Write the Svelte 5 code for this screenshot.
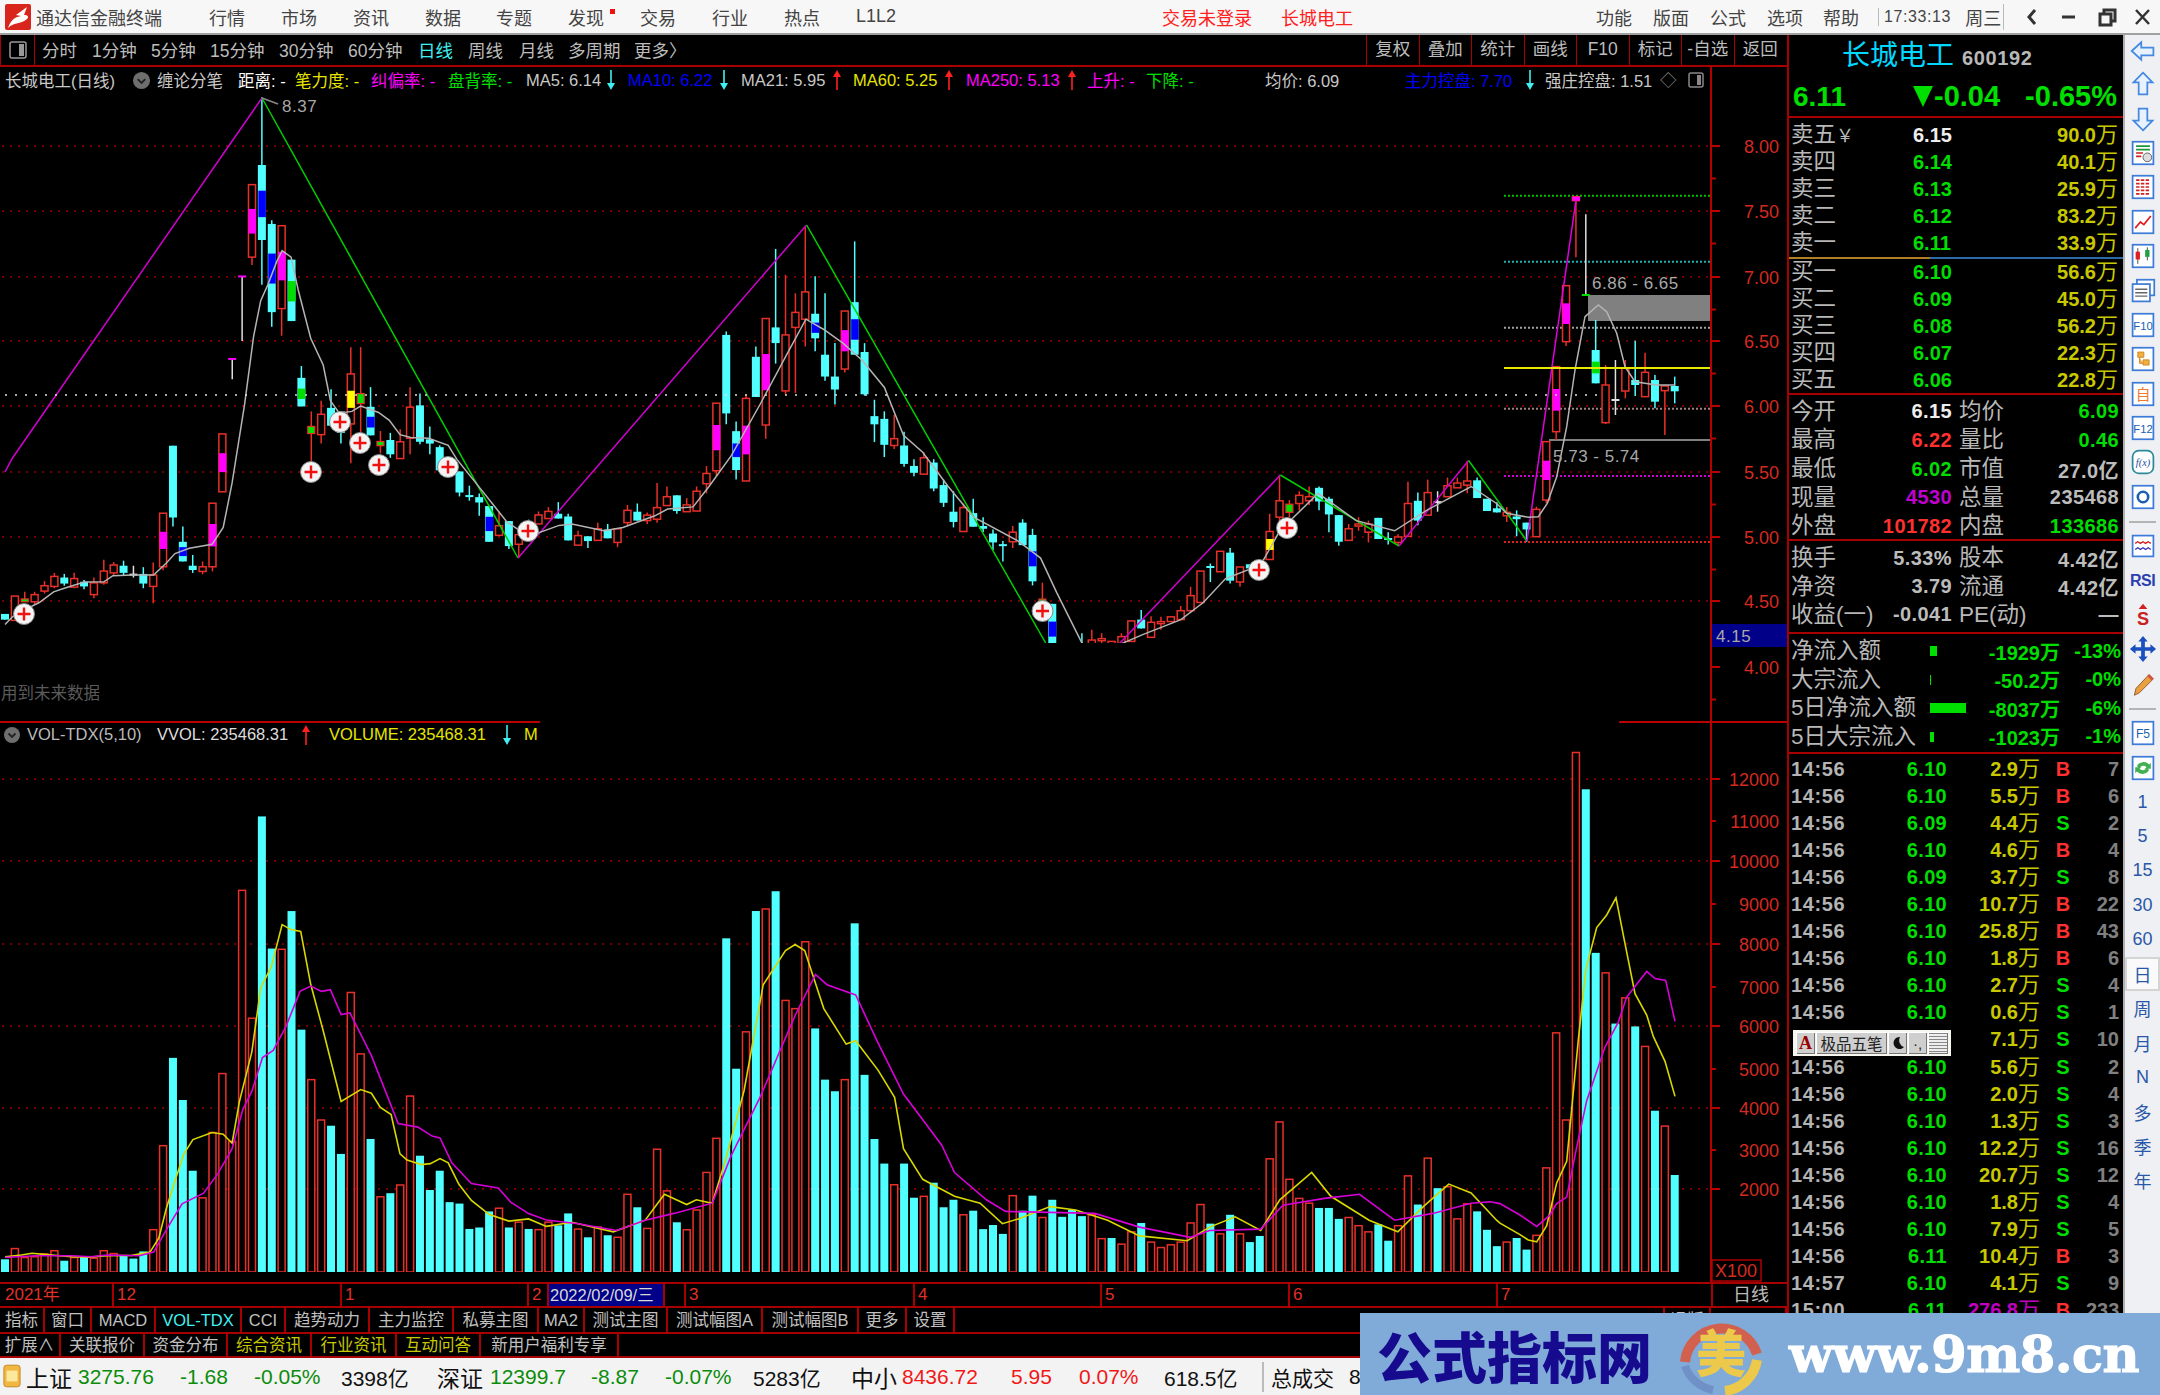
<script>
  // cumulative x -> cell width, so rows stay in normal flex flow
  const flow = (list, end) =>
    list.map((it, i) => ({ ...it, w: (list[i + 1] ? list[i + 1].x : end ?? it.x + 40) - it.x }));

  const menuLeft = flow([
    { x: 36, t: '通达信金融终端' }, { x: 209, t: '行情' }, { x: 281, t: '市场' }, { x: 353, t: '资讯' },
    { x: 425, t: '数据' }, { x: 496, t: '专题' }, { x: 568, t: '发现', dot: true }, { x: 640, t: '交易' },
    { x: 712, t: '行业' }, { x: 784, t: '热点' }, { x: 856, t: 'L1L2' },
    { x: 1162, t: '交易未登录', red: true }, { x: 1281, t: '长城电工', red: true },
    { x: 1596, t: '功能' }, { x: 1653, t: '版面' }, { x: 1710, t: '公式' }, { x: 1767, t: '选项' }, { x: 1823, t: '帮助' }
  ], 1878);

  const periods = flow([
    { x: 42, t: '分时' }, { x: 92, t: '1分钟' }, { x: 151, t: '5分钟' }, { x: 210, t: '15分钟' }, { x: 279, t: '30分钟' },
    { x: 348, t: '60分钟' }, { x: 418, t: '日线', on: true }, { x: 468, t: '周线' }, { x: 519, t: '月线' },
    { x: 568, t: '多周期' }, { x: 634, t: '更多〉' }
  ], 1366);
  const actions = ['复权', '叠加', '统计', '画线', 'F10', '标记', '-自选', '返回'];

  const W = '#c8c8c8', Y = '#e6e600', M = '#ff00ff', G = '#00e000', B = '#0000ff', R = '#ff2020', C = '#40f0f0';
  const info = flow([
    { x: 5, t: '长城电工(日线)', c: W }, { x: 132, icon: true }, { x: 157, t: '缠论分笔', c: W }, { x: 238, t: '距离: -', c: '#fff' },
    { x: 295, t: '笔力度: -', c: Y }, { x: 371, t: '纠偏率: -', c: M }, { x: 448, t: '盘背率: -', c: G },
    { x: 526, t: 'MA5: 6.14', c: W }, { x: 605, arrow: 'down', c: C }, { x: 628, t: 'MA10: 6.22', c: B }, { x: 718, arrow: 'down', c: C },
    { x: 741, t: 'MA21: 5.95', c: W }, { x: 831, arrow: 'up', c: R }, { x: 853, t: 'MA60: 5.25', c: Y }, { x: 943, arrow: 'up', c: R },
    { x: 966, t: 'MA250: 5.13', c: M }, { x: 1066, arrow: 'up', c: R }, { x: 1087, t: '上升: -', c: M }, { x: 1146, t: '下降: -', c: G },
    { x: 1265, t: '均价: 6.09', c: W }, { x: 1405, t: '主力控盘: 7.70', c: B }, { x: 1524, arrow: 'down', c: C },
    { x: 1545, t: '强庄控盘: 1.51', c: W }, { x: 1660, t: '◇', c: '#888' }
  ], 1688);

  // candles: [kind, bodyTop, bodyBottom, high, low, midTop, midBottom, midColour]
  // y values sampled from three crops of different scale, mapped to page y below
  const blockA = [
    ['c',1467,1483],['r',1417,1485],['g',1425,1433,1405,1433],['r',1413,1433,1405,1440],['r',1388,1403,1375,1410],
    ['r',1362,1390,1352,1395],['c',1365,1382,1355,1388],['r',1368,1392,1352,1395],['c',1377,1390,1372,1398],['r',1380,1413,1365,1423],
    ['r',1347,1380,1315,1385],['r',1330,1352,1322,1358],['c',1332,1352,1318,1358],['w',1357,1358,1332,1365],['c',1355,1382,1336,1395],
    ['r',1358,1390,1323,1437],['r',1185,1335,0,1345,1237,1285,'m'],['c',996,1197,0,1222],['c',1265,1320,1222,1320,1280,1305,'b'],['c',1332,1344,1302,1352],
    ['r',1335,1348,1320,1356],['r',1157,1335,0,1348,1215,1278,'m'],['r',963,1125,0,0,1017,1070,'m'],['t',753,754,753,810],['t',522,523,522,703],
    ['r',265,468,0,490,333,402,'m'],['c',210,420,20,545,282,356,'b'],['c',375,622,365,663,458,542,'b'],['r',380,612,0,688,453,533,'m'],['c',475,647,0,0,535,592,'g'],
    ['c',806,886,773,0,836,865,'g'],['g',942,962,900,1040],['r',908,965,870,990],['c',890,940,838,0],['c',900,960,0,990],
    ['r',795,935,720,1045,842,890,'y'],['g',850,878,720,960],['c',887,967,832,0,915,945,'b'],['g',984,996,955,1018],['c',980,1020,960,1030],
    ['r',985,1032,950,0],['r',888,975,832,1020],['c',883,985,850,992],['c',978,990,942,1020],['c',1000,1065,995,0],
    ['c',1030,1070],['c',1068,1127,0,1138],['x',1137,1139,1108,1150],['c',1140,1155,1130,1192],['c',1165,1265,0,0,1195,1235,'b'],
    ['r',1220,1247,1180,0],['c',1207,1277,0,1285],['r',1245,1272,0,1310],['c',1210,1260,1203,0],['r',1190,1215,1180,0],
    ['r',1180,1200,1168,0]
  ];
  const blockB = [
    ['c',445,452,428,0],['c',449,484,445,0],['r',477,491,470,0],['c',478,485,0,495],['r',467,484,458,0],['c',468,481,460,0],['r',467,487,0,494],
    ['r',440,458,432,462],['c',442,455,430,0],['r',447,455,443,460],['r',436,453,400,458],['r',420,433,405,0],['c',418,441,0,445],['r',432,442,422,0],
    ['r',412,441,405,0],['r',386,401,375,415],['r',283,382,0,390,315,352,'m'],['c',183,298,178,314],['c',324,381,310,395,342,362,'b'],['r',276,397,270,0,316,358,'m'],
    ['c',215,274,200,0],['r',159,315,0,335,211,264,'m'],['c',172,195,57,225],['r',183,265,95,270],['r',150,172,122,268],['r',120,160,25,200],
    ['c',152,188,97,207,165,180,'b'],['c',212,244,122,250],['c',244,263,195,285],['r',148,233,0,238,176,207,'m'],['c',135,212,46,0,160,190,'b'],['c',208,270,195,272],
    ['c',302,314,278,340],['c',306,344,295,362],['r',335,345,300,350],['c',345,372,325,376],['c',375,385,365,390],['r',363,387,355,0],['c',370,408,365,412],
    ['c',403,429,395,435],['c',442,457,412,465],['r',436,471,430,0],['c',444,464,423,0],['c',463,467,450,472],['c',474,487,468,498],['x',491,493,485,515],
    ['r',472,486,463,495],['c',458,491,453,0],['c',476,544,467,550,500,522,'b'],['g',570,580,546,600],['c',577,660,0,0,603,625,'b'],
    ['c',700,710],['c',700,710],['c',637,660,620,0],['r',630,636,615,640],['r',628,631,620,640],['r',632,636,0,640],['r',625,635,620,0],
    ['r',602,632],['c',600,613,586,0],['r',604,626,595,0],['r',603,606,596,615],['r',596,603],['r',587,600,580,0],['r',565,587,552,590],['r',529,575],
    ['x',523,526,518,545],['r',500,530],['c',502,543,495,547],['r',523,545,0,552],['c',519,525],['c',520,530],['r',471,512,445,0,482,498,'y'],['r',426,450,388,465],
    ['g',431,443,425,450],['r',418,430,412,440],['r',420,426,405,432],['c',407,427,405,440],['c',423,446,420,472],['c',447,486,0,492],['r',467,484,460,0],
    ['r',460,463,450,470],['r',460,472,455,487],['c',451,482],['x',482,484,472,490],['r',479,487,475,492],['r',430,478,398,0],['c',426,455,414,462],
    ['r',414,447,395,0],['w',428,429,412,442],['r',404,420,392,0],['r',400,407,392,0],['r',397,403,368,415],['c',396,422,392,0],['c',423,441],
    ['c',437,443,428,0],['r',443,448,435,457],['c',449,453,440,478],['c',458,468,0,486]
  ];
  const blockC = [
    ['r',1018,1100,1010,0],['r',815,990,0,1000,872,930,'m'],['r',590,785,0,810,657,722,'m'],['r',347,515,0,528,400,462,'m'],['r',80,92,0,262,80,92,'m'],
    ['d',375,376,133,375],['c',540,640,450,0,575,610,'g'],['r',645,758,585,762],['w',690,691,570,735],['r',595,663,570,685],['c',630,645,512,678],
    ['r',607,680,548,0],['c',630,695,615,715],['r',648,662,0,795],['c',648,664,620,700]
  ];
  const mapA = (y) => 90 + y / 2.8, mapB = (y) => 210 + y / 1.465, mapC = (y) => 170 + y / 3;
  const midColour = { m: '#ff00ff', b: '#0000ff', g: '#00e000', y: '#ffff00' };
  const barX = (i) => 5 + 9.88 * i;
  const candles = [
    ...blockA.map((d) => [d, mapA]), ...blockB.map((d) => [d, mapB]), ...blockC.map((d) => [d, mapC])
  ].map(([d, f], i) => {
    const n = (v) => (v ? f(v) : 0);
    return {
      x: barX(i), k: d[0], top: f(d[1]), bot: f(d[2]), hi: n(d[3]) || f(d[1]), lo: n(d[4]) || f(d[2]),
      mt: n(d[5]), mb: n(d[6]), mc: midColour[d[7]]
    };
  });

  // volume tops, one per bar: positive = up (red), negative = down (cyan)
  const volA = [-1510,1480,1505,1503,1495,1486,-1514,1505,-1503,1507,1486,1494,-1500,-1508,-1488,1427,1192,-946,-1064,-1262,1338,1155,990,1180,477,835,-270,-640,642,-535,-867,1007,1120,-1136,-1215,763,935,-1173,1335,-1325,1302,1053,-1220,-1316,-1262,-1350,-1354,-1425,-1421,-1376,1367,-1421,1406,-1425,1427,1406,-1415];
  const volB = [-1470,1493,-1505,1490,-1502,1505,1442,-1461,1492,1376,1437,-1483,1494,1465,1410,1360,-1067,-1258,1204,-1027,1024,-998,1158,1170,1072,-1199,-1274,-1291,1274,-1045,-1267,-1361,-1397,1428,-1397,-1447,1445,-1425,-1461,-1450,1472,-1466,-1493,-1487,-1500,1444,-1466,-1444,1476,-1450,-1475,-1465,-1474,1472,1507,-1506,1515,1497,-1484,1512,1520,1516,1512,1484,1457,-1485,1500,-1472,1500,-1512,-1503,1390,1336,1420,1448,1455,-1462,-1462,-1478,1476,1488,1497,-1486,-1510,1488,1415,-1457,1389,-1433,1431,1478,1456,-1467,-1494,-1518,1512,-1506,-1523];
  const volC = [1387,1198,820,1064,35,-138,-596,652,-794,722,-802,858,-1038,1081,-1218];
  const tops = [
    ...volA.map((v) => [v, 720 + Math.abs(v) / 2.8]),
    ...volB.map((v) => [v, mapB(Math.abs(v))]),
    ...volC.map((v) => [v, 740 + Math.abs(v) / 2.8])
  ];
  const volBars = tops.map(([v, y], i) => ({ x: barX(i), y, up: v > 0 }));

  const line = (pts, fx, fy) => pts.map(([x, y]) => `${(fx(x)).toFixed(1)},${(fy(y)).toFixed(1)}`).join(' ');
  const xA = (x) => x / 2.8, xB = (x) => 540 + x / 1.568, xC = (x) => 1460 + x / 3, xD = (x) => 1500 + x / 3;
  const vA = (y) => 720 + y / 2.8, vD = (y) => 740 + y / 2.8;

  const maPrice = line([[14,1497],[35,1475],[60,1460],[110,1435],[150,1405],[180,1395],[236,1378],[291,1377],[316,1360],[371,1358],[430,1358],[465,1325],[490,1298],[530,1283],[594,1272],[625,1225],[650,1100],[685,880],[710,690],[730,590],[750,545],[775,480],[790,450],[815,468],[835,560],[870,695],[905,770],[925,870],[950,905],[985,900],[1010,885],[1060,903],[1090,925],[1120,965],[1150,973],[1200,975],[1255,995],[1280,1035],[1340,1110],[1380,1160],[1420,1210],[1450,1230],[1480,1250]], xA, mapA) + ' ' +
    line([[30,462],[50,460],[100,470],[130,465],[180,448],[200,438],[240,435],[265,405],[300,360],[345,285],[385,215],[417,160],[445,175],[475,195],[505,220],[540,260],[570,330],[600,355],[640,405],[680,450],[750,485],[785,510],[810,560],[850,635],[880,650],[900,640],[945,622],[1005,600],[1040,575],[1075,540],[1130,520],[1160,470],[1220,415],[1280,455],[1340,470],[1390,440],[1460,405],[1500,430]], xB, mapB) + ' ' +
    line([[140,1030],[205,1042],[235,1040],[262,1000],[290,920],[320,770],[345,600],[375,440],[415,405],[440,425],[470,490],[495,590],[525,635],[590,645],[645,645]], xC, mapC);

  const volYellow = line([[14,1503],[60,1498],[90,1493],[130,1497],[200,1503],[250,1504],[300,1500],[370,1499],[420,1490],[445,1450],[465,1370],[490,1290],[515,1215],[540,1175],[594,1155],[625,1160],[650,1185],[670,1070],[705,930],[730,750],[760,690],[790,573],[815,587],[842,592],[870,740],[905,870],[955,1068],[1010,1035],[1040,1045],[1065,1085],[1095,1105],[1120,1215],[1140,1232],[1180,1245],[1205,1242],[1232,1228],[1255,1240],[1285,1300],[1320,1345],[1370,1385],[1425,1403],[1480,1397],[1530,1418]], xA, vA) + ' ' +
    line([[50,1483],[115,1497],[165,1480],[195,1442],[230,1457],[245,1450],[270,1455],[290,1395],[320,1290],[350,1135],[385,1085],[400,1076],[415,1085],[445,1170],[480,1222],[495,1217],[530,1260],[556,1300],[570,1375],[600,1420],[650,1445],[690,1455],[725,1485],[750,1478],[800,1460],[840,1465],[890,1480],[940,1503],[1015,1510],[1050,1490],[1090,1475],[1130,1495],[1160,1450],[1210,1410],[1240,1445],[1300,1480],[1345,1497],[1385,1460],[1425,1427],[1460,1440],[1500,1480]], xB, mapB) + ' ' +
    line([[0,1353],[60,1385],[85,1400],[110,1405],[140,1360],[170,1240],[200,1180],[235,840],[258,640],[290,525],[320,490],[348,442],[375,570],[405,710],[440,770],[460,830],[495,900],[525,998]], xD, vD);

  const volMagenta = line([[14,1505],[100,1500],[200,1500],[255,1503],[300,1498],[390,1500],[430,1490],[470,1420],[510,1355],[570,1325],[610,1270],[650,1200],[680,1090],[705,1040],[735,945],[765,925],[800,860],[840,760],[870,745],[900,760],[925,755],[955,825],[980,820],[1040,940],[1115,1130],[1170,1140],[1210,1165],[1232,1170],[1265,1240],[1320,1298],[1395,1310],[1430,1350],[1480,1382],[1530,1400]], xA, vA) + ' ' +
    line([[60,1485],[120,1495],[165,1480],[210,1470],[270,1455],[300,1385],[345,1300],[400,1180],[432,1120],[450,1135],[495,1150],[530,1220],[570,1295],[630,1370],[650,1410],[700,1450],[730,1467],[870,1470],[940,1490],[1020,1505],[1050,1495],[1130,1493],[1165,1458],[1230,1448],[1285,1442],[1340,1480],[1400,1470],[1460,1455],[1490,1453]], xB, mapB) + ' ' +
    line([[0,1298],[60,1330],[110,1362],[150,1330],[170,1298],[200,1280],[230,1140],[260,1010],[315,860],[355,790],[380,720],[440,648],[465,668],[497,673],[525,788]], xD, vD);

  const priceAxis = [[146,'8.00'],[211,'7.50'],[277,'7.00'],[341,'6.50'],[406,'6.00'],[472,'5.50'],[537,'5.00'],[601,'4.50'],[667,'4.00']];
  const volAxis = [[779,'12000',1],[821,'11000'],[861,'10000',1],[904,'9000'],[944,'8000',1],[987,'7000'],[1026,'6000',1],[1069,'5000'],[1108,'4000',1],[1150,'3000'],[1189,'2000',1]];
  const marks = [[24,614],[311,472],[340,422],[360,443],[379,465],[448,467],[528,531],
    [1042.5,611],[1259,570],[1287,528]];

  const sells = [['卖五','6.15','90.0','#eee'],['卖四','6.14','40.1'],['卖三','6.13','25.9'],['卖二','6.12','83.2'],['卖一','6.11','33.9']];
  const buys = [['买一','6.10','56.6'],['买二','6.09','45.0'],['买三','6.08','56.2'],['买四','6.07','22.3'],['买五','6.06','22.8']];
  const GR = '#00dd00', RD = '#ff3030', WH = '#eeeeee', GY = '#bcbcbc';
  const stats1 = [
    ['今开','6.15',WH,'均价','6.09',GR],['最高','6.22',RD,'量比','0.46',GR],['最低','6.02',GR,'市值','27.0亿',GY],
    ['现量','4530','#c000d0','总量','235468',GY],['外盘','101782',RD,'内盘','133686',GR]
  ];
  const stats2 = [['换手','5.33%',GY,'股本','4.42亿',GY],['净资','3.79',GY,'流通','4.42亿',GY],['收益(一)','-0.041',GY,'PE(动)','—',GY]];
  const flows = [['净流入额',7,'-1929万','-13%'],['大宗流入',1,'-50.2万','-0%'],['5日净流入额',36,'-8037万','-6%'],['5日大宗流入',4,'-1023万','-1%']];
  // the eleventh row sits behind the input method bar, only its right half shows
  const trades = [
    ['14:56','6.10','2.9','B',7],['14:56','6.10','5.5','B',6],['14:56','6.09','4.4','S',2],['14:56','6.10','4.6','B',4],['14:56','6.09','3.7','S',8],
    ['14:56','6.10','10.7','B',22],['14:56','6.10','25.8','B',43],['14:56','6.10','1.8','B',6],['14:56','6.10','2.7','S',4],['14:56','6.10','0.6','S',1],
    ['','','7.1','S',10],['14:56','6.10','5.6','S',2],['14:56','6.10','2.0','S',4],['14:56','6.10','1.3','S',3],['14:56','6.10','12.2','S',16],
    ['14:56','6.10','20.7','S',12],['14:56','6.10','1.8','S',4],['14:56','6.10','7.9','S',5],['14:56','6.11','10.4','B',3],['14:57','6.10','4.1','S',9],
    ['15:00','6.11','276.8','B',233]
  ];

  const timeCells = flow([
    { x: 0, t: '2021年' }, { x: 112, t: '12' }, { x: 340, t: '1' }, { x: 527, t: '2' }, { x: 547, t: '2022/02/09/三', hl: true },
    { x: 663, t: '' }, { x: 684, t: '3' }, { x: 913, t: '4' }, { x: 1100, t: '5' }, { x: 1288, t: '6' }, { x: 1496, t: '7' },
    { x: 1711, t: '日线', end: true }
  ], 1787);
  const tabs1 = flow([
    { x: 0, t: '指标' }, { x: 45, t: '窗口' }, { x: 92, t: 'MACD' }, { x: 156, t: 'VOL-TDX', c: '#40f0f0' }, { x: 242, t: 'CCI' },
    { x: 286, t: '趋势动力' }, { x: 370, t: '主力监控' }, { x: 454, t: '私募主图' }, { x: 539, t: 'MA2' }, { x: 585, t: '测试主图' },
    { x: 668, t: '测试幅图A' }, { x: 763, t: '测试幅图B' }, { x: 859, t: '更多' }, { x: 907, t: '设置' }, { x: 955, t: '' },
    { x: 1665, t: '退版' }, { x: 1711, t: '' }
  ], 1787);
  const tabs2 = flow([
    { x: 0, t: '扩展∧' }, { x: 61, t: '关联报价' }, { x: 145, t: '资金分布' }, { x: 228, t: '综合资讯', c: '#c8c800' },
    { x: 312, t: '行业资讯', c: '#c8c800' }, { x: 397, t: '互动问答', c: '#c8c800' }, { x: 481, t: '新用户福利专享' }, { x: 619, t: '' }
  ], 1787);

  const DG = '#0b8c0b', BK = '#111', SR = '#f01818';
  const indexBar = flow([
    { x: 26, t: '上证', c: BK, cjk: true }, { x: 78, t: '3275.76', c: DG }, { x: 180, t: '-1.68', c: DG }, { x: 254, t: '-0.05%', c: DG },
    { x: 341, t: '3398亿', c: BK }, { x: 437, t: '深证', c: BK, cjk: true }, { x: 490, t: '12399.7', c: DG }, { x: 591, t: '-8.87', c: DG },
    { x: 665, t: '-0.07%', c: DG }, { x: 753, t: '5283亿', c: BK }, { x: 851, t: '中小', c: BK, cjk: true }, { x: 902, t: '8436.72', c: SR },
    { x: 1011, t: '5.95', c: SR }, { x: 1079, t: '0.07%', c: SR }, { x: 1164, t: '618.5亿', c: BK },
    { x: 1262, t: '总成交', c: BK, cjk: true, sep: true }, { x: 1349, t: '8', c: BK }
  ], 1400);

  const periodsSide = ['1', '5', '15', '30', '60', '日', '周', '月', 'N', '多', '季', '年'];
</script>

<div class="page">
  <header class="titlebar">
    <svg class="logo" viewBox="0 0 26 26">
      <rect width="26" height="26" rx="2" fill="#d8261c" />
      <path d="M3 24 C6 15 11 13 16 12 L11 11 L22 3 L19 11 C23 11 24 13 22 15 C17 20 9 18 3 24Z" fill="#fff" />
    </svg>
    {#each menuLeft as m}
      <span class="menu" class:red={m.red} style="width:{m.w}px">{m.t}{#if m.dot}<i class="dot"></i>{/if}</span>
    {/each}
    <span class="clock">17:33:13</span>
    <span class="week">周三</span>
    <div class="winctl">
      <svg viewBox="0 0 156 34" width="156" height="34" fill="none" stroke="#333" stroke-width="3">
        <path d="M31 10 L25 17 L31 24" />
        <path d="M58 17H71" />
        <path d="M96 14h11v11h-11zM100 14v-4h11v11h-4" />
        <path d="M132 10L145 24M145 10L132 24" stroke-width="2.5" />
      </svg>
    </div>
  </header>

  <div class="main">
    <div class="leftcol">
      <div class="toolbar">
        <div class="tb-left">
          <svg viewBox="0 0 18 18" width="18" height="18" fill="none" stroke="#999" stroke-width="1.5"><rect x="1" y="1" width="16" height="16" rx="2" /><rect x="10" y="3" width="5" height="12" fill="#999" stroke="none" /></svg>
        </div>
        {#each periods as p}
          <span class="period" class:on={p.on} style="width:{p.w}px">{p.t}</span>
        {/each}
        {#each actions as a}
          <span class="act">{a}</span>
        {/each}
      </div>

      <div class="inforow">
        <div class="infoitems">
          {#each info as it}
            {#if it.icon}
              <span class="infocell" style="width:{it.w}px"><svg viewBox="0 0 20 20" width="19" height="19" class="chev"><circle cx="10" cy="10" r="9" fill="#6e6e6e" /><path d="M6 8.5l4 4 4-4" fill="none" stroke="#222" stroke-width="2" /></svg></span>
            {:else if it.arrow}
              <span class="infocell" style="width:{it.w}px">
                <svg viewBox="0 0 12 22" width="12" height="22">
                  {#if it.arrow === 'up'}
                    <path d="M6 21V6" stroke={it.c} stroke-width="1.6" /><path d="M6 1L10 8H2z" fill={it.c} />
                  {:else}
                    <path d="M6 1V16" stroke={it.c} stroke-width="1.6" /><path d="M6 21L10 14H2z" fill={it.c} />
                  {/if}
                </svg>
              </span>
            {:else}
              <span class="infocell" style="width:{it.w}px;color:{it.c}">{it.t}</span>
            {/if}
          {/each}
          <svg viewBox="0 0 16 16" width="16" height="16" fill="none" stroke="#888" stroke-width="1.5"><rect x="1" y="1" width="14" height="14" rx="2" /><rect x="9" y="3" width="4" height="10" fill="#888" stroke="none" /></svg>
        </div>
      </div>

      <svg class="chart" viewBox="0 93 1787 1189" width="1787" height="1189">
        <defs>
          <clipPath id="priceclip"><rect x="0" y="93" width="1711" height="550" /></clipPath>
          <clipPath id="volclip"><rect x="0" y="745" width="1711" height="527" /></clipPath>
        </defs>

        <g clip-path="url(#priceclip)">
          {#each priceAxis as [y]}
            <line x1="2" x2="1711" y1={y} y2={y} class="grid" />
          {/each}
          <line x1="1504" x2="1711" y1="195.7" y2="195.7" stroke="#00c000" stroke-width="2" stroke-dasharray="2 2" />
          <line x1="1504" x2="1711" y1="261.7" y2="261.7" stroke="#20b0b0" stroke-width="2" stroke-dasharray="2 2" />
          <line x1="1504" x2="1711" y1="327.7" y2="327.7" stroke="#a0a0a0" stroke-width="2" stroke-dasharray="2 2" />
          <line x1="1504" x2="1711" y1="408.7" y2="408.7" stroke="#a08080" stroke-width="2" stroke-dasharray="2 2" />
          <line x1="1504" x2="1711" y1="476" y2="476" stroke="#d000d0" stroke-width="2" stroke-dasharray="2 2" />
          <line x1="1504" x2="1711" y1="542" y2="542" stroke="#e02020" stroke-width="2" stroke-dasharray="2 2" />
          <rect x="1588" y="295" width="123" height="26" fill="#808080" />
          <line x1="1549" x2="1711" y1="440" y2="440" stroke="#808080" stroke-width="2" />

          {#each candles as c}
            {@const cr = c.k === 'r' || c.k === 'g'}
            {#if c.k === 'w' || c.k === 't' || c.k === 'd' || c.k === 'x'}
              <line x1={c.x} x2={c.x} y1={c.hi} y2={c.lo} stroke={c.k === 'x' ? '#50ffff' : '#e0e0e0'} stroke-width="1.5" />
              <line x1={c.x - 4} x2={c.x + 4} y1={c.top} y2={c.top} stroke-width="2"
                stroke={c.k === 't' ? '#ff00ff' : c.k === 'd' ? '#00e000' : c.k === 'x' ? '#50ffff' : '#e0e0e0'} />
            {:else}
              <line x1={c.x} x2={c.x} y1={c.hi} y2={c.lo} stroke={cr ? '#e83028' : '#50ffff'} stroke-width="1.5" />
              {#if c.k === 'g'}
                <rect x={c.x - 3.5} y={c.top} width="7" height={c.bot - c.top} fill="#00e000" stroke="#e83028" stroke-width="1.2" />
              {:else if c.k === 'r'}
                <rect x={c.x - 3.5} y={c.top} width="7" height={c.bot - c.top} fill="#000" stroke="#e83028" stroke-width="1.5" />
              {:else}
                <rect x={c.x - 4} y={c.top} width="8" height={c.bot - c.top} fill="#50ffff" />
              {/if}
              {#if c.mt}
                <rect x={c.x - 3.5} y={c.mt} width="7.5" height={c.mb - c.mt} fill={c.mc} />
              {/if}
            {/if}
          {/each}

          <polyline points="5,472 12.5,458 262,98" class="zz" stroke="#d000d0" />
          <polyline points="262,98 518,558" class="zz" stroke="#00d000" />
          <polyline points="518,558 806.6,225" class="zz" stroke="#d000d0" />
          <polyline points="806.6,225 1045.7,643" class="zz" stroke="#00d000" />
          <polyline points="1119,644 1280.4,475" class="zz" stroke="#d000d0" />
          <polyline points="1280.4,475 1399,546" class="zz" stroke="#00d000" />
          <polyline points="1399,546 1468.6,460.5" class="zz" stroke="#d000d0" />
          <polyline points="1468.6,460.5 1527,541" class="zz" stroke="#00d000" />
          <polyline points="1527,541 1576,200" class="zz" stroke="#e000e0" stroke-width="2" />
          <polyline points={maPrice} class="ma" />
          <line x1="1504" x2="1711" y1="368" y2="368" stroke="#e8e800" stroke-width="2" />
          <line x1="5" x2="1600" y1="395" y2="395" stroke="#e0e0e0" stroke-width="1.5" stroke-dasharray="2 8" />
          <polyline points="262,98 278,104" fill="none" stroke="#888" stroke-width="1.5" />

          {#each marks as [x, y]}
            <circle cx={x} cy={y} r="10.5" fill="#f4f4f4" stroke="#888" stroke-width="1" />
            <path d="M{x - 6.5} {y}H{x + 6.5}M{x} {y - 6.5}V{y + 6.5}" stroke="#f01010" stroke-width="2.4" />
          {/each}
        </g>

        <text x="282" y="112" class="lbl">8.37</text>
        <text x="1592" y="289" class="lbl">6.86 - 6.65</text>
        <text x="1553" y="462" class="lbl">5.73 - 5.74</text>
        <text x="1" y="699" class="ghost">用到未来数据</text>

        <!-- price axis -->
        <line x1="1711" x2="1711" y1="93" y2="1282" class="axis" />
        {#each priceAxis as [y, t]}
          <line x1="1711" x2="1720" y1={y} y2={y} class="axis" />
          <line x1="1711" x2="1716" y1={y + 32.5} y2={y + 32.5} class="axis" />
          <text x="1779" y={y + 7} class="ax" text-anchor="end">{t}</text>
        {/each}
        <rect x="1712" y="624" width="75" height="23" fill="#000088" />
        <text x="1716" y="642" class="lbl" fill="#c8c8c8">4.15</text>

        <line x1="0" x2="540" y1="722" y2="722" class="axis" />
        <line x1="1619" x2="1787" y1="722" y2="722" class="axis" />

        <!-- volume pane header -->
        <circle cx="12" cy="735" r="8" fill="#6e6e6e" />
        <path d="M8.5 733.5l3.5 3.5 3.5-3.5" fill="none" stroke="#222" stroke-width="1.8" />
        <text x="27" y="740" class="hdr" fill="#bbb">VOL-TDX(5,10)</text>
        <text x="157" y="740" class="hdr" fill="#ddd">VVOL: 235468.31</text>
        <path d="M306 745V730" stroke="#ff2020" stroke-width="1.6" /><path d="M306 725l4 7h-8z" fill="#ff2020" />
        <text x="329" y="740" class="hdr" fill="#e6e600">VOLUME: 235468.31</text>
        <path d="M507 725V740" stroke="#40f0f0" stroke-width="1.6" /><path d="M507 745l4-7h-8z" fill="#40f0f0" />
        <text x="524" y="740" class="hdr" fill="#e6e600" textLength="16">M</text>

        <g clip-path="url(#volclip)">
          {#each volAxis as [y, , major]}
            {#if major}
              <line x1="2" x2="1711" y1={y} y2={y} class="grid" />
            {/if}
          {/each}
          {#each volBars as b}
            {#if b.up}
              <rect x={b.x - 3.5} y={b.y} width="7" height={1272 - b.y} fill="#000" stroke="#e83028" stroke-width="1.5" />
            {:else}
              <rect x={b.x - 4} y={b.y} width="8" height={1272 - b.y} fill="#50ffff" />
            {/if}
          {/each}
          <polyline points={volYellow} fill="none" stroke="#d8d800" stroke-width="1.6" />
          <polyline points={volMagenta} fill="none" stroke="#d800d8" stroke-width="1.6" />
        </g>
        {#each volAxis as [y, t, major]}
          <line x1="1711" x2={major ? 1720 : 1716} y1={y} y2={y} class="axis" />
          <text x="1779" y={y + 7} class="ax" text-anchor="end">{t}</text>
        {/each}
        <rect x="1712" y="1260" width="49" height="21" fill="#000" stroke="#b00000" stroke-width="1.5" />
        <text x="1715" y="1277" class="ax">X100</text>
      </svg>

      <div class="timerow">
        {#each timeCells as c}
          <span class="tcell" class:hl={c.hl} class:tend={c.end} style="width:{c.w}px">{c.t}</span>
        {/each}
      </div>
      <div class="tabrow">
        {#each tabs1 as t}
          <span class="tab" style="width:{t.w}px;color:{t.c ?? ''}">{t.t}</span>
        {/each}
      </div>
      <div class="tabrow">
        {#each tabs2 as t}
          <span class="tab" style="width:{t.w}px;color:{t.c ?? ''}">{t.t}</span>
        {/each}
      </div>
    </div>

    <aside class="panel">
      <div class="p-head">
        <div class="p-name"><span class="nm">长城电工</span><span class="code">600192</span></div>
        <div class="p-quote"><span class="q1">6.11</span><span class="q2"><i class="tri"></i>-0.04</span><span class="q3">-0.65%</span></div>
      </div>
      <div class="book">
        {#each sells as s, i}
          <div class="brow">
            <span class="lab">{s[0]}{#if i === 0}<em class="yen"> ￥</em>{/if}</span>
            <b class="bpx" style="color:{s[3] ?? '#00dd00'}">{s[1]}</b>
            <b class="bvol">{s[2]}<span class="wan">万</span></b>
          </div>
        {/each}
        <div class="midline"><i></i><i></i></div>
        {#each buys as s}
          <div class="brow">
            <span class="lab">{s[0]}</span>
            <b class="bpx" style="color:#00dd00">{s[1]}</b>
            <b class="bvol">{s[2]}<span class="wan">万</span></b>
          </div>
        {/each}
      </div>
      <div class="stats s1">
        {#each stats1 as r}
          <div class="srow"><span class="lab">{r[0]}</span><b style="color:{r[2]}">{r[1]}</b><span class="lab second">{r[3]}</span><b style="color:{r[5]}">{r[4]}</b></div>
        {/each}
      </div>
      <div class="stats s2">
        {#each stats2 as r}
          <div class="srow"><span class="lab">{r[0]}</span><b style="color:{r[2]}">{r[1]}</b><span class="lab second">{r[3]}</span><b style="color:{r[5]}">{r[4]}</b></div>
        {/each}
      </div>
      <div class="flows">
        {#each flows as f}
          <div class="frow">
            <span class="lab">{f[0]}</span>
            <span class="fbar"><i style="width:{f[1]}px"></i></span>
            <b class="fval">{f[2]}</b>
            <b class="fpct">{f[3]}</b>
          </div>
        {/each}
      </div>
      <div class="trades">
        {#each trades as t}
          <div class="trow">
            <b class="t1">{t[0]}</b>
            <b class="t2">{t[1]}</b>
            <b class="t3" class:big={t[2] === '276.8'}>{t[2]}<span class="wan">万</span></b>
            <b class="t4" class:buy={t[3] === 'B'}>{t[3]}</b>
            <b class="t5">{t[4]}</b>
          </div>
        {/each}
      </div>
    </aside>

    <nav class="side">
      <div class="si"><svg viewBox="0 0 30 30" width="26" height="26"><path d="M2 15L13 5v6h14v9H13v5z" class="ar" /></svg></div>
      <div class="si"><svg viewBox="0 0 30 30" width="26" height="28"><path d="M15 2L26 13h-6v14h-10V13H4z" class="ar" /></svg></div>
      <div class="si"><svg viewBox="0 0 30 30" width="26" height="28"><path d="M15 28L26 17h-6V3h-10v14H4z" class="ar" /></svg></div>
      <div class="si"><svg viewBox="0 0 30 30" width="26" height="30"><rect x="3" y="2" width="24" height="26" class="bx" /><path d="M7 7h16M7 11h16" stroke="#1a9a3a" stroke-width="2" /><path d="M7 15h8M7 19h6" stroke="#d02020" stroke-width="2" /><circle cx="20" cy="20" r="5" fill="#ddd" stroke="#555" /></svg></div>
      <div class="si"><svg viewBox="0 0 30 30" width="26" height="30"><rect x="3" y="2" width="24" height="26" class="bx" /><path d="M7 7h16M7 11h16M7 15h16M7 19h16M7 23h16" stroke="#d02020" stroke-width="2" stroke-dasharray="4 1.5" /></svg></div>
      <div class="si"><svg viewBox="0 0 30 30" width="26" height="30"><rect x="3" y="2" width="24" height="26" class="bx" /><path d="M6 22l6-7 4 3 8-10" fill="none" stroke="#e02020" stroke-width="2" /></svg></div>
      <div class="si"><svg viewBox="0 0 30 30" width="26" height="30"><rect x="3" y="2" width="24" height="26" class="bx" /><path d="M9 6v18M20 5v15" stroke="#333" /><rect x="6.5" y="10" width="5" height="9" fill="#e02020" /><rect x="17.5" y="8" width="5" height="8" fill="#20a040" /></svg></div>
      <div class="si"><svg viewBox="0 0 30 30" width="26" height="28"><rect x="8" y="2" width="20" height="18" class="bx" /><rect x="3" y="7" width="20" height="20" class="bx" /><path d="M6 13h14M6 17h14M6 21h14" stroke="#666" stroke-width="1.5" /></svg></div>
      <div class="si"><svg viewBox="0 0 30 30" width="26" height="30"><rect x="3" y="2" width="24" height="26" class="bx" /><text x="15" y="21" class="sit" font-size="13" text-anchor="middle">F10</text></svg></div>
      <div class="si"><svg viewBox="0 0 30 30" width="26" height="30"><rect x="3" y="2" width="24" height="26" class="bx" /><path d="M9 7h7v6H9zM15 16h7v6h-7zM11 13v7h4" fill="#f0b040" stroke="#d08020" /></svg></div>
      <div class="si"><svg viewBox="0 0 30 30" width="26" height="30"><rect x="3" y="2" width="24" height="26" class="bx" /><text x="15" y="22" font-size="17" fill="#ee7a30" text-anchor="middle" font-family="Noto Sans CJK SC">自</text></svg></div>
      <div class="si"><svg viewBox="0 0 30 30" width="26" height="30"><rect x="3" y="2" width="24" height="26" class="bx" /><text x="15" y="21" class="sit" font-size="13" text-anchor="middle">F12</text></svg></div>
      <div class="si"><svg viewBox="0 0 30 30" width="26" height="30"><rect x="3" y="2" width="24" height="26" rx="7" fill="#fff" stroke="#2a8a9a" stroke-width="2" /><text x="15" y="20" font-size="12" fill="#2a4fa0" text-anchor="middle" font-family="Liberation Serif" font-style="italic">f(x)</text></svg></div>
      <div class="si"><svg viewBox="0 0 30 30" width="26" height="30"><rect x="3" y="2" width="24" height="26" class="bx" /><circle cx="15" cy="15" r="6" fill="none" stroke="#1a5fb0" stroke-width="3" /></svg></div>
      <div class="sep"></div>
      <div class="si"><svg viewBox="0 0 30 30" width="26" height="28"><rect x="3" y="3" width="24" height="24" class="bx" /><path d="M6 12l3-2 3 2 3-2 3 2 3-2 3 2" fill="none" stroke="#d02020" stroke-width="1.5" /><path d="M6 19l3-2 3 2 3-2 3 2 3-2 3 2" fill="none" stroke="#3030c0" stroke-width="1.5" /></svg></div>
      <div class="si"><span class="rsi">RSI</span></div>
      <div class="si"><svg viewBox="0 0 30 30" width="26" height="30"><path d="M15 2l5 6h-10z" fill="#d02020" /><text x="15" y="26" font-size="21" font-weight="bold" fill="#c82020" text-anchor="middle" font-family="Liberation Sans">S</text></svg></div>
      <div class="si"><svg viewBox="0 0 30 30" width="28" height="28"><path d="M15 1l5 6h-3v6h6v-3l6 5-6 5v-3h-6v6h3l-5 6-5-6h3v-6H7v3l-6-5 6-5v3h6V7h-3z" fill="#1a4fc0" /></svg></div>
      <div class="si"><svg viewBox="0 0 30 30" width="26" height="30"><path d="M5 28l2-8L22 4l5 5L11 25z" fill="#e8a040" stroke="#905020" /><path d="M22 4l5 5-2 2-5-5z" fill="#d85040" /></svg></div>
      <div class="sep"></div>
      <div class="si"><svg viewBox="0 0 30 30" width="26" height="30"><rect x="3" y="2" width="24" height="26" class="bx" /><text x="15" y="21" class="sit" font-size="14" text-anchor="middle">F5</text></svg></div>
      <div class="si"><svg viewBox="0 0 30 30" width="26" height="30"><rect x="3" y="2" width="24" height="26" class="bx" /><path d="M8 13a8 7 0 0 1 14-2l2-2v7h-7l2-2a5 5 0 0 0-8 1zM22 17a8 7 0 0 1-14 2l-2 2v-7h7l-2 2a5 5 0 0 0 8-1z" fill="#40b050" /></svg></div>
      {#each periodsSide as p}
        <div class="si txt" class:sel={p === '日'}>{p}</div>
      {/each}
    </nav>
  </div>

  <footer class="status">
    <svg class="sicon" viewBox="0 0 20 26" width="18" height="24"><rect x="1" y="1" width="18" height="24" rx="3" fill="#f0b840" stroke="#c08020" /><rect x="4" y="7" width="12" height="12" fill="#fde8a0" /></svg>
    {#each indexBar as s}
      <span class="stat" class:cjk={s.cjk} class:ssep={s.sep} style="width:{s.w}px;color:{s.c}">{s.t}</span>
    {/each}
  </footer>

  <!-- input method bar floats over the trade list -->
  <div class="ime">
    <span class="ib a">A</span><span class="ib wb">极品五笔</span>
    <span class="ib"><svg viewBox="0 0 14 14" width="14" height="14"><path d="M9 1a6 6 0 1 0 4 10A7 7 0 0 1 9 1z" fill="#111" /></svg></span>
    <span class="ib">·,</span>
    <span class="ib kb"></span>
  </div>

  <!-- watermark banner lies over the bottom right corner -->
  <div class="banner">
    <span class="bn-cn">公式指标网</span>
    <svg class="bn-logo" viewBox="0 0 84 84" width="84" height="84">
      <path d="M6 50A37 37 0 0 1 78 42" fill="none" stroke="#d2604f" stroke-width="10" />
      <path d="M78 48A37 37 0 0 1 46 79" fill="none" stroke="#ecc94a" stroke-width="10" />
      <path d="M6 54A37 37 0 0 0 34 78" fill="none" stroke="#7090c8" stroke-width="8" />
      <text x="42" y="60" font-size="50" font-weight="900" fill="#ecc94a" text-anchor="middle" font-family="Noto Sans CJK SC">美</text>
    </svg>
    <span class="bn-url">www.9m8.cn</span>
  </div>
</div>

<style>
  :global(body) { margin: 0; background: #000; }
  .page {
    position: relative;
    width: 2160px; height: 1395px; overflow: hidden;
    display: flex; flex-direction: column;
    background: #000;
    font-family: "Liberation Sans", "Noto Sans CJK SC", sans-serif;
  }
  b { font-weight: bold; }

  .titlebar {
    height: 33px; flex: none; display: flex; align-items: center; position: relative;
    background: #f7f7f7; border-bottom: 2px solid #a0a0a0; color: #444; font-size: 18px;
  }
  .logo { width: 26px; height: 26px; margin-left: 5px; margin-right: 5px; flex: none; }
  .menu { flex: none; white-space: nowrap; position: relative; }
  .menu.red { color: #ff2020; }
  .dot { position: absolute; left: 42px; top: 5px; width: 5px; height: 5px; background: #f01010; }
  .clock { width: 75px; padding-left: 5px; border-left: 1px solid #bbb; margin-left: 0; letter-spacing: 0.6px; font-size: 16px; }
  .week { width: 38px; padding-left: 7px; border-right: 1px solid #bbb; }
  .winctl { flex: none; display: flex; }

  .main { flex: 1; display: flex; min-height: 0; }
  .leftcol { width: 1787px; flex: none; display: flex; flex-direction: column; }

  .toolbar {
    height: 31px; flex: none; display: flex; align-items: center; color: #bcbcbc; font-size: 17.5px;
    border-bottom: 2px solid #a80000; margin-top: -1px;
  }
  .tb-left {
    width: 35px; height: 100%; margin-right: 7px; flex: none; display: flex; align-items: center; justify-content: center;
    border-right: 1px solid #a80000; border-left: 1px solid #a80000; box-sizing: border-box;
  }
  .period { flex: none; white-space: nowrap; }
  .period.on { color: #40f0f0; }
  .act {
    flex: none; width: 52.5px; box-sizing: border-box; text-align: center; line-height: 31px;
    border-left: 1px solid #a80000; white-space: nowrap;
  }

  .inforow { height: 26px; flex: none; width: 1710px; border-right: 2px solid #b00000; box-sizing: content-box; }
  .infoitems { display: flex; align-items: center; height: 100%; padding-left: 5px; font-size: 16.5px; }
  .infocell { flex: none; white-space: nowrap; display: flex; align-items: center; }
  .chev { margin-left: 0; }

  .chart { display: block; flex: none; font-family: "Liberation Sans", "Noto Sans CJK SC", sans-serif; }
  .grid { stroke: #9a0000; stroke-width: 1.5; stroke-dasharray: 2 6; }
  .axis { stroke: #b80000; stroke-width: 2; }
  .zz { fill: none; stroke-width: 1.5; }
  .ma { fill: none; stroke: #b4b4b4; stroke-width: 1.5; }
  .lbl { font-size: 17px; fill: #a8a8a8; letter-spacing: 0.5px; }
  .ghost { font-size: 16.5px; fill: #5a5a5a; }
  .ax { font-size: 18px; fill: #d42a20; }
  .hdr { font-size: 16.5px; }

  .timerow, .tabrow { display: flex; flex: none; border-top: 2px solid #a80000; box-sizing: border-box; }
  .timerow { height: 24px; color: #e03028; font-size: 17px; line-height: 22px; }
  .tcell { flex: none; box-sizing: border-box; border-left: 2px solid #a80000; padding-left: 3px; white-space: nowrap; }
  .tcell:first-child { border-left: 0; padding-left: 5px; }
  .tcell.hl { background: #000088; color: #d8d8d8; font-size: 16.5px; padding-left: 1px; }
  .tend { color: #bbb; font-size: 18px; padding-left: 20px; }
  .tabrow { height: 26px; color: #c0c0c0; font-size: 16.5px; line-height: 24px; }
  .tabrow:last-child { border-bottom: 2px solid #a80000; height: 26px; line-height: 22px; }
  .tab { flex: none; box-sizing: border-box; border-right: 2px solid #a80000; text-align: center; white-space: nowrap; overflow: hidden; }

  .panel {
    width: 336px; flex: none; box-sizing: border-box; border-left: 2px solid #a80000; border-right: 0;
    color: #bcbcbc; overflow: hidden; display: flex; flex-direction: column;
  }
  .p-head { height: 83px; flex: none; box-sizing: border-box; border-bottom: 2px solid #a80000; }
  .p-name { height: 38px; padding-left: 53px; display: flex; align-items: flex-end; }
  .nm { color: #00d8ff; font-size: 28px; line-height: 34px; }
  .code { color: #b8b8b8; font-size: 20px; letter-spacing: 0.6px; margin-left: 8px; line-height: 30px; font-weight: bold; }
  .p-quote { height: 43px; box-sizing: border-box; padding-top: 4px; display: flex; align-items: center; color: #00e000; font-weight: bold; }
  .q1 { font-size: 28px; margin-left: 4px; width: 120px; }
  .q2 { font-size: 29px; width: 110px; display: flex; align-items: center; }
  .q3 { font-size: 29px; width: 94px; text-align: right; }
  .tri { width: 0; height: 0; border-left: 10px solid transparent; border-right: 10px solid transparent; border-top: 21px solid #00e000; margin-right: 1px; }

  .book { height: 277px; flex: none; box-sizing: border-box; padding-top: 3.5px; border-bottom: 2px solid #a80000; }
  .brow { height: 27px; display: grid; grid-template-columns: 122px 40px 165px; align-items: center; padding-left: 2px; }
  .lab { font-size: 22.5px; line-height: 26px; white-space: nowrap; color: #b8b8b8; }
  .second { margin-left: 7px; }
  .yen { font-style: normal; font-size: 18px; }
  .bpx { font-size: 20px; }
  .bvol { text-align: right; color: #c8c800; font-size: 20px; display: block; line-height: 20px; margin-top: -1px; }
  .wan { font-size: 22px; font-weight: normal; line-height: 20px; }
  .midline { height: 2px; display: flex; }
  .midline i:first-child { width: 141px; background: #b08028; }
  .midline i:last-child { flex: 1; background: #2a6aa8; }

  .stats { flex: none; box-sizing: border-box; border-bottom: 2px solid #a80000; }
  .s1 { height: 146px; padding-top: 2.5px; }
  .s2 { height: 93px; padding-top: 2.5px; }
  .srow { height: 28.6px; display: grid; grid-template-columns: 68px 93px 75px 92px; align-items: center; padding-left: 2px; }
  .srow b { font-size: 20px; text-align: right; letter-spacing: 0.4px; white-space: nowrap; }
  .srow > b:first-of-type { grid-column: 2; }

  .flows { height: 120px; flex: none; box-sizing: border-box; padding-top: 2.5px; border-bottom: 2px solid #a80000; }
  .frow { height: 28.5px; display: grid; grid-template-columns: 139px 48px 82px 61px; align-items: center; padding-left: 2px; color: #00dd00; }
  .fbar { display: flex; align-items: center; }
  .fbar i { height: 10px; background: #00e000; display: block; }
  .fval, .fpct { font-size: 20px; font-weight: bold; text-align: right; white-space: nowrap; }

  .trades { flex: 1; min-height: 0; padding-top: 1.5px; }
  .trow { height: 27.1px; display: grid; grid-template-columns: 92px 64px 93px 46px 33px; align-items: center; padding-left: 2px; font-size: 20px; }
  .t1 { color: #b4b4b4; letter-spacing: 0.6px; }
  .t2 { color: #00dd00; text-align: right; letter-spacing: 0.3px; }
  .t3 { color: #c8c800; text-align: right; line-height: 20px; margin-top: -1px; }
  .t3.big { color: #c000c0; }
  .t4 { color: #00dd00; text-align: center; }
  .t4.buy { color: #ff3030; }
  .t5 { color: #808080; text-align: right; }

  .side { flex: 1; background: #eff0f3; border-left: 2px solid #b0b0b0; box-sizing: border-box; display: flex; flex-direction: column; overflow: hidden; }
  .si { height: 34.4px; flex: none; display: flex; align-items: center; justify-content: center; }
  .si:first-child { height: 32px; }
  .sep { height: 15px; flex: none; position: relative; }
  .sep::after { content: ''; position: absolute; left: 4px; right: 4px; top: 7px; border-top: 2px solid #b4b4b4; }
  .ar { fill: #e8f2ff; stroke: #4488e0; stroke-width: 2; }
  .bx { fill: #fff; stroke: #3c7cd8; stroke-width: 2; }
  .sit { fill: #1a5fb0; font-family: "Liberation Sans", sans-serif; }
  .rsi { font-size: 16px; font-weight: bold; color: #2a3fb0; letter-spacing: -0.5px; }
  .txt { color: #2a58a8; font-size: 18px; }
  .txt.sel { background: #fafafa; box-shadow: inset 0 0 0 2px #d4d4d4; }

  .status { height: 37px; flex: none; background: #f3f3f3; display: flex; align-items: center; position: relative; font-size: 21px; }
  .sicon { position: absolute; left: 3px; top: 6px; }
  .stat { flex: none; white-space: nowrap; box-sizing: border-box; }
  .stat:first-of-type { margin-left: 26px; }
  .cjk { font-size: 23px; color: #222; }
  .ssep { border-left: 2px solid #bbb; padding-left: 7px; font-size: 21px; }

  .ime {
    position: absolute; left: 1793px; top: 1030px; height: 26px; width: 158px; box-sizing: border-box;
    background: #f6f6ee; padding: 2px 3px; display: flex; gap: 1px;
    font-size: 15px; color: #222;
  }
  .ib { background: #cfcfcf; box-shadow: inset 1px 1px 0 #fff, inset -1px -1px 0 #777; width: 19px; display: flex; align-items: center; justify-content: center; }
  .ib.a { color: #900; font-family: "Liberation Serif", serif; font-weight: bold; font-size: 18px; }
  .ib.wb { width: 71px; font-size: 15.5px; white-space: nowrap; }
  .ib.kb { flex: 1; background: repeating-linear-gradient(0deg, #eee 0 2px, #888 2px 3px); }

  .banner {
    position: absolute; left: 1360px; top: 1313px; right: 0; bottom: 0;
    background: #80aad8; display: flex; align-items: center;
  }
  .bn-cn { font-size: 55px; font-weight: 900; color: #160a8e; line-height: 64px; margin-left: 17px; white-space: nowrap; font-family: "Noto Sans CJK SC", sans-serif; }
  .bn-logo { margin-left: 27px; flex: none; }
  .bn-url { font-family: "DejaVu Serif", serif; font-weight: bold; color: #fff; font-size: 51px; margin-left: 26px; white-space: nowrap; letter-spacing: -0.5px; -webkit-text-stroke: 1.2px #fff; }
</style>
